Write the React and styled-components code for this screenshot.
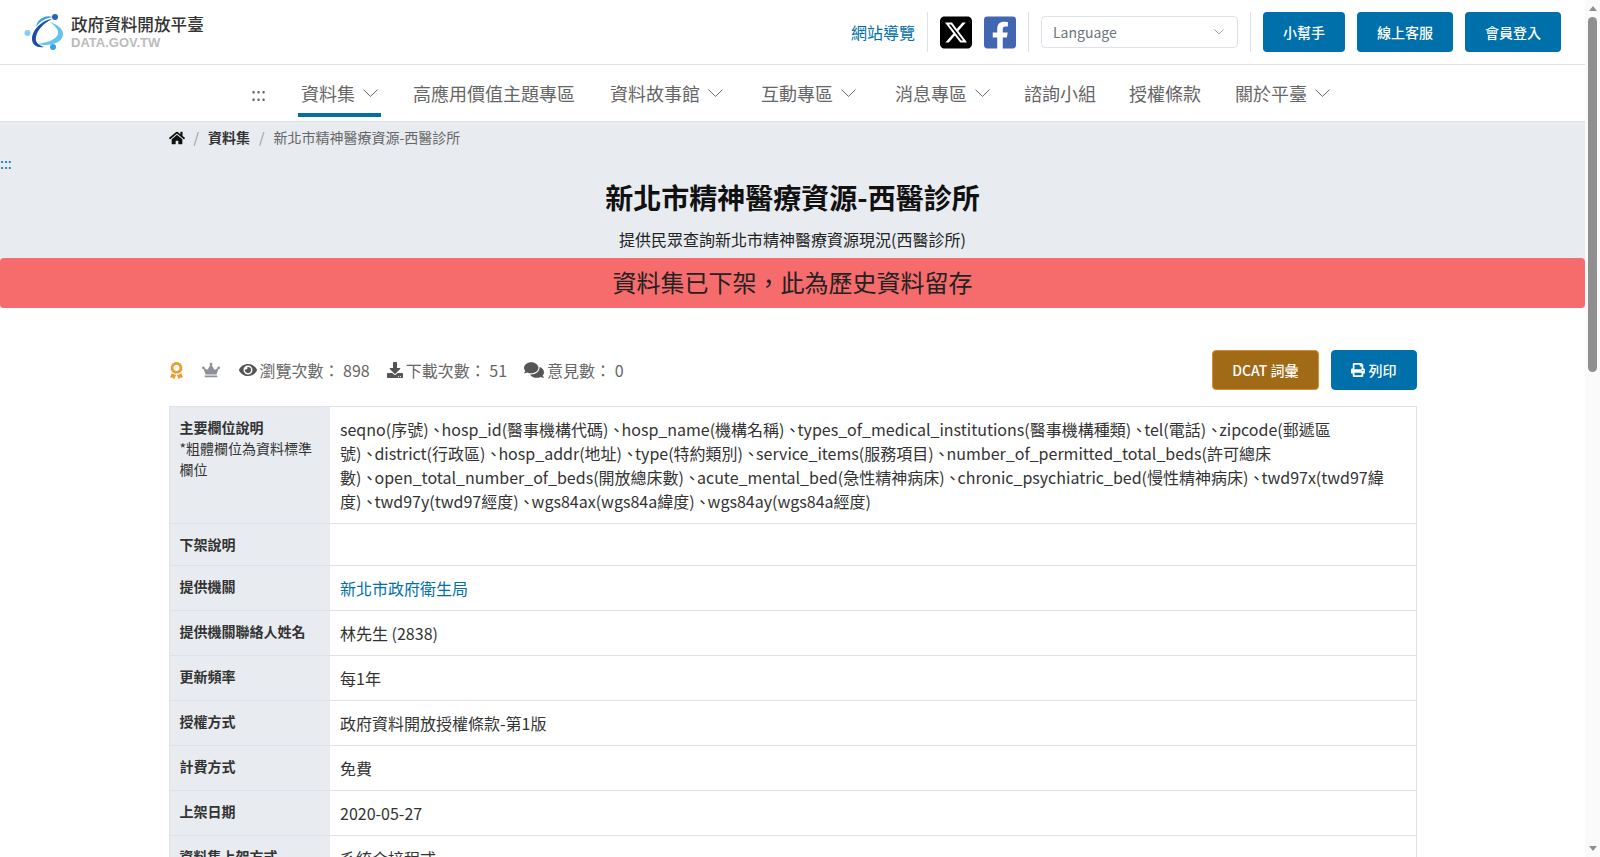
import styled, { createGlobalStyle } from "styled-components";
import { FaHome, FaEye, FaDownload, FaComments, FaPrint, FaCrown, FaAward, FaFacebookSquare } from "react-icons/fa";
import { FaSquareXTwitter } from "react-icons/fa6";

const BLUE = "#0070aa";
const LINE = "#dfe1ea";
const GREY = "#e8ebf0";

const GlobalStyle = createGlobalStyle`
  body {
    margin: 0;
    padding-right: 15px;
    background: #fff;
    color: #333;
    font-family: "Noto Sans CJK TC", "Noto Sans", sans-serif;
    font-size: 16px;
    line-height: 24px;
  }
  * {
    box-sizing: border-box;
  }
  a {
    color: ${BLUE};
    text-decoration: none;
  }
`;

const ScrollRail = styled.div`
  position: fixed;
  top: 0;
  right: 0;
  bottom: 0;
  width: 15px;
  padding: 6px 3px;
  display: flex;
  flex-direction: column;
  align-items: center;
  background: #fafafa;
`;

const ScrollArrow = styled.span`
  width: 0;
  height: 0;
  border-left: 4px solid transparent;
  border-right: 4px solid transparent;
  border-${(props) => (props.$down ? "top" : "bottom")}: 5px solid #8f8f8f;
  margin-top: ${(props) => (props.$down ? "auto" : "0")};
`;

const ScrollThumb = styled.span`
  width: 9px;
  height: 355px;
  margin-top: 6px;
  border-radius: 5px;
  background: #8f8f8f;
`;

const TopBar = styled.header`
  height: 65px;
  padding: 0 24px;
  display: flex;
  align-items: center;
  justify-content: space-between;
  border-bottom: 1px solid ${LINE};
`;

const Logo = styled.a`
  display: flex;
  align-items: center;
  gap: 5px;
  margin-top: -1px;
`;

const LogoText = styled.div`
  display: flex;
  flex-direction: column;
`;

const LogoTitle = styled.span`
  font-size: 16.6px;
  line-height: 20px;
  font-weight: 500;
  color: #333;
  white-space: nowrap;
`;

const LogoSub = styled.span`
  font-family: "Liberation Sans", sans-serif;
  font-size: 13px;
  line-height: 15px;
  font-weight: 700;
  color: #bbb;
  margin-top: 1px;
`;

const TopActions = styled.div`
  display: flex;
  align-items: center;
  gap: 12px;
`;

const Divider = styled.span`
  width: 1px;
  height: 40px;
  background: ${LINE};
`;

const SocialLink = styled.a`
  width: 32px;
  height: 32px;
  display: flex;
  align-items: center;
  justify-content: center;
  color: ${(props) => props.color};
  font-size: 37px;
`;

const LangSelect = styled.div`
  width: 197px;
  height: 32px;
  padding: 0 13px 0 11px;
  display: flex;
  align-items: center;
  justify-content: space-between;
  border: 1px solid ${LINE};
  border-radius: 4px;
  color: #6c757d;
  font-size: 14px;
`;

const TopButton = styled.a`
  height: 40px;
  padding: 0 20px;
  display: flex;
  align-items: center;
  border-radius: 4px;
  background: ${BLUE};
  color: #fff;
  font-size: 14px;
  font-weight: 500;
`;

const NavBar = styled.nav`
  height: 57px;
  padding-right: 4px;
  display: flex;
  justify-content: center;
  gap: 29px;
  border-bottom: 1px solid ${LINE};
`;

const NavItem = styled.a`
  height: 52px;
  padding: 15px 3px 6px;
  margin-right: ${(props) => props.$trail || 0}px;
  display: flex;
  align-items: center;
  gap: 8px;
  color: #666;
  font-size: 18px;
  line-height: 27px;
  white-space: nowrap;
  border-bottom: 4px solid ${(props) => (props.$active ? BLUE : "transparent")};
`;

const Hero = styled.section`
  background: ${GREY};
`;

const Wrap = styled.div`
  max-width: 1280px;
  margin: 0 auto;
  padding: 0 16px;
`;

const Crumbs = styled.ol`
  margin: 0;
  padding: 0;
  height: 31px;
  list-style: none;
  display: flex;
  align-items: center;
  font-size: 14px;
  line-height: 21px;
  color: #666;
`;

const Crumb = styled.li`
  display: flex;
  align-items: center;
  font-weight: ${(props) => (props.$strong ? 700 : 400)};
  color: ${(props) => (props.$strong ? "#333" : "#666")};

  &:not(:first-child)::before {
    content: "/";
    padding: 0 9px;
    color: #999;
    font-weight: 400;
  }
`;

const HomeLink = styled.a`
  display: flex;
  color: #111;
  font-size: 16px;
`;

const SkipMark = styled.a`
  display: block;
  height: 24px;
  font-size: 14px;
  line-height: 21px;
`;

const Title = styled.h1`
  margin: 0;
  font-size: 28px;
  line-height: 40px;
  font-weight: 700;
  color: #111;
  text-align: center;
`;

const Subtitle = styled.p`
  margin: 10px 0 0;
  padding-bottom: 7px;
  color: #222;
  text-align: center;
`;

const Banner = styled.div`
  height: 50px;
  border-radius: 4px;
  background: #f66c6c;
  color: #222;
  font-size: 24px;
  line-height: 48px;
  text-align: center;
`;

const Toolbar = styled.div`
  height: 40px;
  margin: 42px 0 16px;
  display: flex;
  align-items: center;
  justify-content: space-between;
`;

const Stats = styled.div`
  display: flex;
  align-items: center;
  gap: 17px;
  color: #666;
`;

const Badge = styled.span`
  display: flex;
  margin: 0 ${(props) => props.$after}px 0 ${(props) => props.$before}px;
  color: ${(props) => props.color};
  font-size: ${(props) => props.size}px;
`;

const Stat = styled.span`
  display: flex;
  align-items: center;
  gap: 3px;
  white-space: nowrap;
`;

const StatIcon = styled.span`
  display: flex;
  font-size: ${(props) => props.size}px;
  color: #555;
`;

const ToolButtons = styled.div`
  display: flex;
  gap: 12px;
`;

const ToolButton = styled.a`
  height: 40px;
  padding: 0 19px;
  display: flex;
  align-items: center;
  gap: 4px;
  border: 1px solid ${(props) => props.$edge};
  border-radius: 4px;
  background: ${(props) => props.$fill};
  color: #fff;
  font-size: 14px;
  font-weight: 500;
`;

const InfoTable = styled.table`
  width: 100%;
  border-collapse: collapse;
  table-layout: fixed;
`;

const LabelCell = styled.th`
  width: 161px;
  padding: 10px;
  background: ${GREY};
  border: 1px solid ${LINE};
  border-right: none;
  font-size: 14px;
  line-height: 21px;
  font-weight: 700;
  text-align: left;
  vertical-align: top;
`;

const LabelNote = styled.span`
  display: block;
  font-weight: 400;
`;

const ValueCell = styled.td`
  padding: 10px;
  border: 1px solid ${LINE};
  border-left: none;
  vertical-align: top;
`;

const FieldSep = styled.span`
  letter-spacing: -3px;
`;

const Footer = styled.footer`
  margin-top: 60px;
  padding: 48px 0;
  height: 650px;
  background: ${GREY};
  font-size: 14px;
`;

const navItems = [
  { label: "資料集", menu: true, active: true },
  { label: "高應用價值主題專區" },
  { label: "資料故事館", menu: true, trail: 3 },
  { label: "互動專區", menu: true, trail: 4 },
  { label: "消息專區", menu: true, trail: -1 },
  { label: "諮詢小組", trail: -2 },
  { label: "授權條款", trail: -1 },
  { label: "關於平臺", menu: true },
];

const fieldLines = [
  ["seqno(序號)", "hosp_id(醫事機構代碼)", "hosp_name(機構名稱)", "types_of_medical_institutions(醫事機構種類)", "tel(電話)", "zipcode(郵遞區"],
  ["號)", "district(行政區)", "hosp_addr(地址)", "type(特約類別)", "service_items(服務項目)", "number_of_permitted_total_beds(許可總床"],
  ["數)", "open_total_number_of_beds(開放總床數)", "acute_mental_bed(急性精神病床)", "chronic_psychiatric_bed(慢性精神病床)", "twd97x(twd97緯"],
  ["度)", "twd97y(twd97經度)", "wgs84ax(wgs84a緯度)", "wgs84ay(wgs84a經度)"],
];

const rows = [
  { label: "下架說明", value: "" },
  { label: "提供機關", value: <a href="#org">新北市政府衛生局</a> },
  { label: "提供機關聯絡人姓名", value: "林先生 (2838)" },
  { label: "更新頻率", value: "每1年" },
  { label: "授權方式", value: "政府資料開放授權條款-第1版" },
  { label: "計費方式", value: "免費" },
  { label: "上架日期", value: "2020-05-27" },
  { label: "資料集上架方式", value: "系統介接程式" },
  { label: "詮釋資料更新時間", value: "2023-09-21 01:01:20" },
  { label: "資料量", value: "87" },
  { label: "編碼格式", value: "UTF-8" },
  { label: "資料集類型", value: "原始資料" },
  { label: "服務分類", value: "生育保健" },
  { label: "備註", value: "" },
];

function Chevron({ width = 15 }) {
  return (
    <svg width={width} height={width * 0.55} viewBox="0 0 15 8" fill="none" stroke="currentColor" strokeWidth="1">
      <path d="M0.5 0.5 L7.5 7.3 L14.5 0.5" />
    </svg>
  );
}

function LogoMark() {
  return (
    <svg width="42" height="40" viewBox="0 0 42 40" fill="none">
      <path d="M13 32 C25 35 40 31 39 21 C38 15 31 12 26 10 C31 14 35 18 34 22 C32 28 22 31 13 32 Z" fill="#63c5ea" />
      <path d="M28 7 C18 8 8 18 8 27 C8 33 13 36 20 35 C14 33 11 30 12 25 C13 18 20 11 28 7 Z" fill="#1c4fa3" />
      <path d="M12 15 C13 8 20 2 29 5 C22 6 16 9 12 15 Z" fill="#3aa3e0" />
      <circle cx="31" cy="5" r="3" fill="#2a62b8" />
      <circle cx="3.5" cy="21" r="3" fill="#7fd0ee" />
      <circle cx="29" cy="35" r="3" fill="#3aa3e0" />
    </svg>
  );
}

function App() {
  return (
    <>
      <GlobalStyle />
      <ScrollRail>
        <ScrollArrow />
        <ScrollThumb />
        <ScrollArrow $down />
      </ScrollRail>
      <TopBar>
        <Logo href="#home">
          <LogoMark />
          <LogoText>
            <LogoTitle>政府資料開放平臺</LogoTitle>
            <LogoSub>DATA.GOV.TW</LogoSub>
          </LogoText>
        </Logo>
        <TopActions>
          <a href="#map">網站導覽</a>
          <Divider />
          <SocialLink href="#x" color="#000">
            <FaSquareXTwitter />
          </SocialLink>
          <SocialLink href="#fb" color="#4267b2">
            <FaFacebookSquare />
          </SocialLink>
          <Divider />
          <LangSelect>
            Language
            <Chevron width={10} />
          </LangSelect>
          <Divider />
          <TopButton href="#help">小幫手</TopButton>
          <TopButton href="#service">線上客服</TopButton>
          <TopButton href="#login">會員登入</TopButton>
        </TopActions>
      </TopBar>

      <NavBar>
        <NavItem href="#top">:::</NavItem>
        {navItems.map((item) => (
          <NavItem href="#nav" key={item.label} $active={item.active} $trail={item.trail}>
            {item.label}
            {item.menu && <Chevron />}
          </NavItem>
        ))}
      </NavBar>

      <Hero>
        <Wrap>
          <Crumbs>
            <Crumb>
              <HomeLink href="#home">
                <FaHome />
              </HomeLink>
            </Crumb>
            <Crumb $strong>資料集</Crumb>
            <Crumb>新北市精神醫療資源-西醫診所</Crumb>
          </Crumbs>
        </Wrap>
        <SkipMark href="#main">:::</SkipMark>
        <Title>新北市精神醫療資源-西醫診所</Title>
        <Subtitle>提供民眾查詢新北市精神醫療資源現況(西醫診所)</Subtitle>
        <Banner>資料集已下架，此為歷史資料留存</Banner>
      </Hero>

      <Wrap as="main" id="main">
        <Toolbar>
          <Stats>
            <Badge color="#eb9c2f" size={17} $before={-1} $after={0}>
              <FaAward />
            </Badge>
            <Badge color="#8d8f99" size={18} $before={0} $after={2}>
              <FaCrown />
            </Badge>
            <Stat>
              <StatIcon size={18}>
                <FaEye />
              </StatIcon>
              瀏覽次數： 898
            </Stat>
            <Stat>
              <StatIcon size={16}>
                <FaDownload />
              </StatIcon>
              下載次數： 51
            </Stat>
            <Stat>
              <StatIcon size={20}>
                <FaComments />
              </StatIcon>
              意見數： 0
            </Stat>
          </Stats>
          <ToolButtons>
            <ToolButton href="#dcat" $fill="#a06a17" $edge="#d8912a">
              DCAT 詞彙
            </ToolButton>
            <ToolButton href="#print" $fill={BLUE} $edge={BLUE}>
              <FaPrint />
              列印
            </ToolButton>
          </ToolButtons>
        </Toolbar>

        <InfoTable>
          <tbody>
            <tr>
              <LabelCell scope="row">
                主要欄位說明
                <LabelNote>*粗體欄位為資料標準欄位</LabelNote>
              </LabelCell>
              <ValueCell>
                {fieldLines.map((line, i) => (
                  <div key={i}>
                    {line.map((field, j) => (
                      <span key={j}>
                        {j > 0 && <FieldSep>、</FieldSep>}
                        {field}
                      </span>
                    ))}
                  </div>
                ))}
              </ValueCell>
            </tr>
            {rows.map((row) => (
              <tr key={row.label}>
                <LabelCell scope="row">{row.label}</LabelCell>
                <ValueCell>{row.value}</ValueCell>
              </tr>
            ))}
          </tbody>
        </InfoTable>
      </Wrap>

      <Footer>
        <Wrap>政府資料開放平臺 DATA.GOV.TW</Wrap>
      </Footer>
    </>
  );
}

export default App;
